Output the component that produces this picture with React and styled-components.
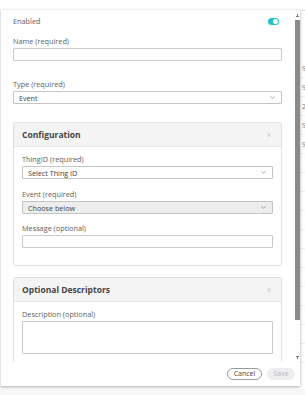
import React from "react";
import styled, { createGlobalStyle } from "styled-components";
import { ChevronDown, ChevronsUp } from "lucide-react";

// Page level defaults
const GlobalStyle = createGlobalStyle`
  html, body {
    margin: 0;
    padding: 0;
    background: #f7f7f7;
    font-family: "Open Sans", "Noto Sans", sans-serif;
    color: #555;
  }
  * { box-sizing: border-box; }
`;

const Page = styled.div`
  position: relative;
  width: 305px;
  height: 395px;
  overflow: hidden;
  background: #f7f7f7;
`;

const TopBar = styled.div`
  height: 11px;
  background: #fff;
  border-bottom: 1px solid #dcdcdc;
`;

const BgList = styled.div`
  padding-top: 48px;
  background: #fff;
  height: 378px;
`;

const BgRow = styled.div`
  height: 19px;
  padding-left: 302px;
  font-size: 7px;
  line-height: 19px;
  color: #777;
  border-bottom: 1px solid #eee;
`;

// Dialog (sits over the page)
const Dialog = styled.div`
  position: absolute;
  top: 10px;
  left: 0;
  width: 300px;
  height: 376px;
  background: #fff;
  border-left: 1px solid #e4e4e4;
  box-shadow: 0 1px 3px rgba(0, 0, 0, 0.35);
  display: flex;
  flex-direction: column;
`;

const Main = styled.div`
  flex: 1;
  min-height: 0;
  display: flex;
`;

const Body = styled.div`
  flex: 1;
  overflow: hidden;
  padding: 6px 13px 0 12px;
`;

// hand drawn scrollbar, the headless browser hides the real one
const ScrollRail = styled.div`
  width: 5px;
  display: flex;
  flex-direction: column;
  padding-top: 2px;
`;

const ScrollArrow = styled.div`
  height: 7px;
  background: ${(p) =>
    p.down
      ? "conic-gradient(from 330deg at 50% 70%, #777 0 60deg, transparent 60deg)"
      : "conic-gradient(from 150deg at 50% 30%, #777 0 60deg, transparent 60deg)"};
  background-size: 100% 4px;
  background-repeat: no-repeat;
  background-position: 0 1px;
`;

const ScrollThumb = styled.div`
  height: 300px;
  background: #8a8a8a;
  margin-top: 1px;
`;

const ScrollSpace = styled.div`
  flex: 1;
`;

const EnabledRow = styled.div`
  display: flex;
  justify-content: space-between;
  align-items: center;
  height: 10px;
  padding-right: 3px;
  margin-bottom: 10px;
`;

const Toggle = styled.div`
  width: 11px;
  height: 7px;
  border-radius: 4px;
  background: ${(p) => (p.on ? "#23c2ca" : "#ccc")};
  display: flex;
  align-items: center;
  justify-content: ${(p) => (p.on ? "flex-end" : "flex-start")};
  padding: 0 1px;
`;

const Knob = styled.div`
  width: 5px;
  height: 5px;
  border-radius: 50%;
  background: #fff;
`;

const Field = styled.div`
  margin-bottom: ${(p) => p.gap || 0}px;
`;

const Label = styled.div`
  font-size: 7.3px;
  line-height: 10px;
  color: #606060;
  margin-bottom: ${(p) => (p.flat ? 0 : 2)}px;
  white-space: nowrap;
`;

const Input = styled.div`
  height: ${(p) => p.h || 13}px;
  border: 1px solid #c9c9c9;
  border-radius: 1px;
  background: #fff;
`;

const Select = styled.div`
  height: 13px;
  border: 1px solid #c4c4c4;
  border-radius: 1px;
  background: ${(p) => (p.filled ? "#ededed" : "#fff")};
  display: flex;
  align-items: center;
  justify-content: space-between;
  padding: 0 5px 0 5px;
  font-size: 7.2px;
  color: #444;
  white-space: nowrap;
`;

const Panel = styled.div`
  border: 1px solid #e2e2e2;
  border-radius: 2px;
  margin-bottom: ${(p) => p.gap || 0}px;
`;

const PanelHeader = styled.div`
  height: 24px;
  background: #f4f4f4;
  border-bottom: 1px solid #e6e6e6;
  display: flex;
  align-items: center;
  justify-content: space-between;
  padding: 0 9px 0 8px;
`;

const PanelTitle = styled.div`
  font-size: 8.5px;
  font-weight: 700;
  color: #444;
`;

const PanelBody = styled.div`
  padding: 7px 8px ${(p) => p.bottom || 8}px 8px;
`;

const Footer = styled.div`
  height: 24px;
  display: flex;
  align-items: center;
  justify-content: flex-end;
  gap: 5px;
  padding-right: 5px;
`;

const Button = styled.button`
  height: 12px;
  padding: 0;
  width: ${(p) => p.w}px;
  border-radius: 7px;
  font-family: "Open Sans", sans-serif;
  font-size: 7px;
  line-height: 10px;
  border: 1px solid ${(p) => (p.disabled ? "#eeeeee" : "#9a9a9a")};
  background: ${(p) => (p.disabled ? "#eeeeee" : "#fff")};
  color: ${(p) => (p.disabled ? "#b9b9b9" : "#444")};
`;

const bgRows = ["9", "9", "2", "9", "9", "", "", "", "", "", "", "", "", "", "", ""];

function App() {
  return (
    <Page>
      <GlobalStyle />
      <TopBar />
      <BgList>
        {bgRows.map((t, i) => (
          <BgRow key={i}>{t}</BgRow>
        ))}
      </BgList>

      <Dialog>
        <Main>
          <Body>
            <EnabledRow>
              <Label flat>Enabled</Label>
              <Toggle on>
                <Knob />
              </Toggle>
            </EnabledRow>

            <Field gap={18}>
              <Label>Name (required)</Label>
              <Input />
            </Field>

            <Field gap={18}>
              <Label>Type (required)</Label>
              <Select>
                Event
                <ChevronDown size={7} strokeWidth={2} color="#666" />
              </Select>
            </Field>

            <Panel gap={11}>
              <PanelHeader>
                <PanelTitle>Configuration</PanelTitle>
                <ChevronsUp size={6} strokeWidth={2} color="#999" />
              </PanelHeader>
              <PanelBody bottom={17}>
                <Field gap={10}>
                  <Label>ThingID (required)</Label>
                  <Select>
                    Select Thing ID
                    <ChevronDown size={7} strokeWidth={2} color="#666" />
                  </Select>
                </Field>
                <Field gap={9}>
                  <Label>Event (required)</Label>
                  <Select filled>
                    Choose below
                    <ChevronDown size={7} strokeWidth={2} color="#666" />
                  </Select>
                </Field>
                <Field>
                  <Label>Message (optional)</Label>
                  <Input />
                </Field>
              </PanelBody>
            </Panel>

            <Panel>
              <PanelHeader>
                <PanelTitle>Optional Descriptors</PanelTitle>
                <ChevronsUp size={6} strokeWidth={2} color="#999" />
              </PanelHeader>
              <PanelBody bottom={12}>
                <Field>
                  <Label>Description (optional)</Label>
                  <Input h={33} />
                </Field>
              </PanelBody>
            </Panel>
          </Body>

          <ScrollRail>
            <ScrollArrow />
            <ScrollThumb />
            <ScrollSpace />
            <ScrollArrow down />
          </ScrollRail>
        </Main>

        <Footer>
          <Button w={35}>Cancel</Button>
          <Button w={28} disabled>
            Save
          </Button>
        </Footer>
      </Dialog>
    </Page>
  );
}

export default App;
